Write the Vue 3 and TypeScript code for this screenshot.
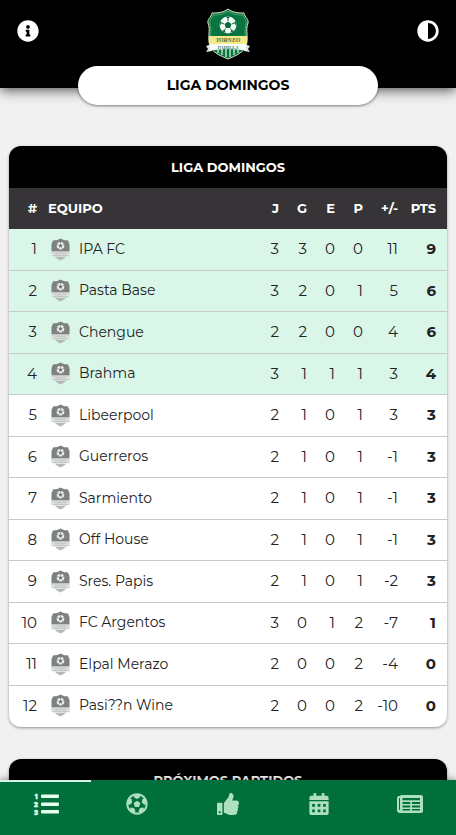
<script setup lang="ts">
import { ref } from 'vue'

interface Team {
  name: string
  played: number
  won: number
  drawn: number
  lost: number
  diff: number
  points: number
}

type Row = [string, number, number, number, number, number, number]

const rows: Row[] = [
  ['IPA FC', 3, 3, 0, 0, 11, 9],
  ['Pasta Base', 3, 2, 0, 1, 5, 6],
  ['Chengue', 2, 2, 0, 0, 4, 6],
  ['Brahma', 3, 1, 1, 1, 3, 4],
  ['Libeerpool', 2, 1, 0, 1, 3, 3],
  ['Guerreros', 2, 1, 0, 1, -1, 3],
  ['Sarmiento', 2, 1, 0, 1, -1, 3],
  ['Off House', 2, 1, 0, 1, -1, 3],
  ['Sres. Papis', 2, 1, 0, 1, -2, 3],
  ['FC Argentos', 3, 0, 1, 2, -7, 1],
  ['Elpal Merazo', 2, 0, 0, 2, -4, 0],
  ['Pasi??n Wine', 2, 0, 0, 2, -10, 0],
]

const teams: Team[] = rows.map(([name, played, won, drawn, lost, diff, points]) => ({
  name, played, won, drawn, lost, diff, points,
}))

const qualifying = 4
const tabs = ['Posiciones', 'Partidos', 'Favoritos', 'Calendario', 'Noticias']
const active = ref(0)
</script>

<template>
  <div class="shell">
    <header class="topbar">
      <button class="icon-button" type="button" aria-label="Información">
        <svg viewBox="0 0 512 512" aria-hidden="true">
          <path d="M256 8C119.043 8 8 119.083 8 256c0 136.997 111.043 248 248 248s248-111.003 248-248C504 119.083 392.957 8 256 8zm0 110c23.196 0 42 18.804 42 42s-18.804 42-42 42-42-18.804-42-42 18.804-42 42-42zm56 254c0 6.627-5.373 12-12 12h-88c-6.627 0-12-5.373-12-12v-24c0-6.627 5.373-12 12-12h12v-64h-12c-6.627 0-12-5.373-12-12v-24c0-6.627 5.373-12 12-12h64c6.627 0 12 5.373 12 12v100h12c6.627 0 12 5.373 12 12v24z" />
        </svg>
      </button>

      <svg class="crest" viewBox="0 0 46 52" role="img" aria-label="Torneo Padilla">
        <path d="M23 1C18 5 12 5 7 5C6 10 2 11 3 15C6 22 2 30 5 38C8 45 16 48 23 51C30 48 38 45 41 38C44 30 40 22 43 15C44 11 40 10 39 5C34 5 28 5 23 1Z" fill="#08743f" stroke="#dfe8c4" stroke-width="1" />
        <path d="M23 3C18 7 13 7 8 7C7 11 4 12 5 16C7 23 5 30 6 36M23 3C28 7 33 7 38 7C39 11 42 12 41 16C39 23 41 30 40 36" fill="none" stroke="#4da172" stroke-width="1" />
        <circle cx="23" cy="17" r="8.5" fill="#f4faf5" />
        <path d="M23 13.5l3.500 2.500-1.300 4h-4.400L19.500 16z" fill="#0b6a3b" />
        <path d="M23 13V9M27 16l4-2M25.500 20.500l2.500 4M20.500 20.500l-2.500 4M19 16l-4-2" stroke="#0b6a3b" stroke-width="1" />
        <path d="M20.500 8.800h5l-2.500 1.700zM31 13l.5 5-2-2.500zM15 13l-.5 5 2-2.500zM29 22l-3.500 3 .5-2.500zM17 22l3.500 3-.5-2.500z" fill="#0b6a3b" />
        <path d="M13 41v4M17 41v6M21 41v8M25 41v8M29 41v6M33 41v4" stroke="#d9eadb" stroke-width="1.300" />
        <path d="M1 38l6-2v7l-6 1 2-3zM45 38l-6-2v7l6 1-2-3z" fill="#dce9e1" />
        <rect x="4" y="28" width="38" height="8" fill="#f5e98c" />
        <path d="M5 36h36v6.500c-12-2-24-2-36 0z" fill="#f8fbfa" />
        <text x="23" y="34" text-anchor="middle" class="crest-name">TORNEO</text>
        <text x="23" y="40.500" text-anchor="middle" class="crest-sub">PADILLA</text>
      </svg>

      <button class="icon-button" type="button" aria-label="Cambiar tema">
        <svg viewBox="0 0 512 512" aria-hidden="true">
          <path d="M8 256c0 136.966 111.033 248 248 248s248-111.034 248-248S392.966 8 256 8 8 119.033 8 256zm248 184V72c101.705 0 184 82.311 184 184 0 101.705-82.311 184-184 184z" />
        </svg>
      </button>

      <h1 class="league">LIGA DOMINGOS</h1>
    </header>

    <main class="content">
      <section class="card">
        <h2 class="card-title">LIGA DOMINGOS</h2>
        <table class="standings">
          <thead>
            <tr>
              <th class="rank" scope="col">#</th>
              <th class="team" scope="col">EQUIPO</th>
              <th class="num" scope="col">J</th>
              <th class="num" scope="col">G</th>
              <th class="num" scope="col">E</th>
              <th class="num" scope="col">P</th>
              <th class="diff" scope="col">+/-</th>
              <th class="points" scope="col">PTS</th>
            </tr>
          </thead>
          <tbody>
            <tr v-for="(team, index) in teams" :key="team.name" :class="{ qualified: index < qualifying }">
              <td class="rank">{{ index + 1 }}</td>
              <td class="team">
                <div class="team-cell">
                  <svg class="shield" viewBox="0 0 20 24" aria-hidden="true">
                    <path d="M10 .5C7 2.500 4 2.500 2 2.500C2 4 .5 5 .5 7V14h19V7c0-2-1.500-3-1.500-4.500C16 2.500 13 2.500 10 .5z" fill="#7d8280" />
                    <circle cx="10" cy="8" r="4" fill="#eceeed" />
                    <path d="M10 6.300l1.700 1.300-.6 2.100H8.900l-.6-2.100z" fill="#6d7472" />
                    <path d="M10 4v2M12 7.500l2-1M11.300 10l1.200 1.500M8.700 10l-1.200 1.500M8 7.500l-2-1" stroke="#6d7472" stroke-width=".7" />
                    <path d="M0 14h20v5H0z" fill="#dfe2e1" />
                    <path d="M1 14.500h18M4 16.500h12M2 18.500h16" stroke="#b2b7b5" stroke-width=".8" />
                    <path d="M4 19.500h12c-2 2-4 3-6 4c-2-1-4-2-6-4z" fill="#b5bab8" />
                  </svg>
                  <span class="team-name">{{ team.name }}</span>
                </div>
              </td>
              <td class="num">{{ team.played }}</td>
              <td class="num">{{ team.won }}</td>
              <td class="num">{{ team.drawn }}</td>
              <td class="num">{{ team.lost }}</td>
              <td class="diff">{{ team.diff }}</td>
              <td class="points">{{ team.points }}</td>
            </tr>
          </tbody>
        </table>
      </section>

      <section class="card">
        <h2 class="card-title">PRÓXIMOS PARTIDOS</h2>
      </section>
    </main>

    <nav class="tabs" aria-label="Secciones">
      <button
        v-for="(tab, index) in tabs"
        :key="tab"
        type="button"
        class="tab"
        :class="{ active: index === active }"
        :aria-label="tab"
        @click="active = index"
      >
        <svg v-if="index === 0" class="wide" viewBox="0 0 26 24" aria-hidden="true">
          <rect x="8" y="2.500" width="18" height="3.500" rx="1" />
          <rect x="8" y="10.500" width="18" height="3.500" rx="1" />
          <rect x="8" y="18" width="18" height="3.500" rx="1" />
          <text x="3" y="6.500" text-anchor="middle" class="digit">1</text>
          <text x="3" y="14.500" text-anchor="middle" class="digit">2</text>
          <text x="3" y="22.500" text-anchor="middle" class="digit">3</text>
        </svg>
        <svg v-else-if="index === 1" viewBox="0 0 512 512" aria-hidden="true">
          <path d="M504 256c0 136.967-111.033 248-248 248S8 392.967 8 256 119.033 8 256 8s248 111.033 248 248zm-48 0l-.003-.282-26.064 22.741-62.679-58.500 16.454-84.355 34.303 3.072c-24.889-34.216-60.004-60.089-100.709-73.141l13.651 31.939L256 139l-74.953-41.525 13.651-31.939c-40.631 13.028-75.780 38.870-100.709 73.141l34.565-3.073 16.192 84.355-62.678 58.500-26.064-22.741-.003.282c0 43.015 13.497 83.952 38.472 117.991l7.704-33.897 85.138 10.447 36.301 77.826-29.902 17.786c40.202 13.122 84.290 13.148 124.572 0l-29.902-17.786 36.301-77.826 85.138-10.447 7.704 33.897C442.503 339.952 456 299.015 456 256zm-248.102 69.571l-29.894-91.312L256 177.732l77.996 56.527-29.622 91.312h-96.476z" />
        </svg>
        <svg v-else-if="index === 2" viewBox="0 0 512 512" aria-hidden="true">
          <path d="M104 224H24c-13.255 0-24 10.745-24 24v240c0 13.255 10.745 24 24 24h80c13.255 0 24-10.745 24-24V248c0-13.255-10.745-24-24-24zM64 472c-13.255 0-24-10.745-24-24s10.745-24 24-24 24 10.745 24 24-10.745 24-24 24zM384 81.452c0 42.416-25.970 66.208-33.277 94.548h101.723c33.397 0 59.397 27.746 59.553 58.098.084 17.938-7.546 37.249-19.439 49.197l-.11.11c9.836 23.337 8.237 56.037-9.308 79.469 8.681 25.895-.069 57.704-16.382 74.757 4.298 17.598 2.244 32.575-6.148 44.632C440.202 511.587 389.616 512 346.839 512l-2.845-.001c-48.287-.017-87.806-17.598-119.560-31.725-15.957-7.099-36.821-15.887-52.651-16.178-6.540-.120-11.783-5.457-11.783-11.998v-213.770c0-3.200 1.282-6.271 3.558-8.521 39.614-39.144 56.648-80.587 89.117-113.111 14.804-14.832 20.188-37.236 25.393-58.902C282.515 39.293 291.817 0 312 0c24 0 72 8 72 81.452z" />
        </svg>
        <svg v-else-if="index === 3" viewBox="0 0 512 512" aria-hidden="true">
          <path fill-rule="evenodd" d="M32 192h448v272c0 26.500-21.500 48-48 48H80c-26.500 0-48-21.500-48-48zM96 256v64h64v-64zM224 256v64h64v-64zM352 256v64h64v-64zM96 384v64h64v-64zM224 384v64h64v-64zM352 384v64h64v-64zM432 64h-48V16c0-8.800-7.200-16-16-16h-32c-8.800 0-16 7.200-16 16v48H192V16c0-8.800-7.200-16-16-16h-32c-8.800 0-16 7.200-16 16v48H80c-26.500 0-48 21.500-48 48v48h448v-48c0-26.500-21.500-48-48-48z" />
        </svg>
        <svg v-else class="wide" viewBox="0 0 26 24" aria-hidden="true">
          <path fill-rule="evenodd" d="M5 3h19a2 2 0 0 1 2 2v14a2 2 0 0 1-2 2H3a3 3 0 0 1-3-3V6a2 2 0 0 1 2-2h1a2 2 0 0 1 2-1zM2 6v12h1V6zM5.500 6v2.300H23V6zM5.500 10v2h7.800v-2zM15 10v2h8v-2zM5.500 13.500v2h7.800v-2zM15 13.500v2h8v-2zM5.500 17v1.500h7.800V17zM15 17v1.500h8V17z" />
        </svg>
      </button>
    </nav>
  </div>
</template>

<style>
body {
  margin: 0;
  background: #f2f1f2;
}
</style>

<style scoped>
.shell {
  display: flex;
  flex-direction: column;
  height: 100vh;
  overflow: hidden;
  background: #f2f1f2;
  color: #222;
  font-family: Montserrat, Inter, "Liberation Sans", sans-serif;
  font-size: 15px;
  line-height: 1.5;
}

.shell * {
  box-sizing: border-box;
}

button {
  padding: 0;
  border: 0;
  background: none;
  color: inherit;
  cursor: pointer;
}

.topbar {
  position: relative;
  z-index: 2;
  display: flex;
  flex: none;
  justify-content: space-between;
  align-items: flex-start;
  height: 88px;
  padding: 8px 17px 0;
  background: #000;
  box-shadow: 0 2px 12px rgba(0, 0, 0, 0.7);
}

.icon-button {
  display: flex;
  align-items: center;
  height: 45px;
  color: #fff;
}

.icon-button svg {
  display: block;
  width: 22px;
  height: 22px;
  fill: currentColor;
}

.crest {
  width: 46px;
  height: 52px;
}

.crest-name {
  fill: #3d6b35;
  font: italic bold 6px "Liberation Serif", serif;
}

.crest-sub {
  fill: #3d7a65;
  font: italic bold 5px "Liberation Serif", serif;
}

.league {
  position: absolute;
  top: 66px;
  left: 50%;
  width: 300px;
  margin: 0 0 0 -150px;
  border-radius: 20px;
  background: #fff;
  box-shadow: 0 1px 3px rgba(0, 0, 0, 0.5);
  color: #000;
  font-size: 14px;
  font-weight: 700;
  line-height: 39px;
  text-align: center;
}

.content {
  flex: 1;
  min-height: 0;
  padding: 58px 9px 32px;
  overflow-y: auto;
  scrollbar-width: none;
}

.card {
  margin-bottom: 32px;
  overflow: hidden;
  border-radius: 12px;
  background: #fff;
  box-shadow: 0 1px 3px rgba(0, 0, 0, 0.4);
}

.card-title {
  margin: 0;
  background: #000;
  color: #fff;
  font-size: 13px;
  font-weight: 700;
  line-height: 42px;
  text-align: center;
}

.standings {
  width: 100%;
  border-collapse: separate;
  border-spacing: 0;
  table-layout: fixed;
}

th,
td {
  padding: 9px 11px 9px 0;
  text-align: right;
  white-space: nowrap;
}

th {
  padding-top: 0;
  padding-bottom: 0;
  background: #373438;
  color: #fff;
  font-size: 13px;
  font-weight: 700;
  line-height: 41px;
}

td {
  border-bottom: 1px solid #cacaca;
}

tr:last-child td {
  border-bottom-color: transparent;
}

.qualified td {
  background: #d9f6e9;
}

.rank {
  width: 39px;
}

.team {
  padding-right: 0;
  text-align: left;
}

.num {
  width: 28px;
}

.diff {
  width: 35px;
}

.points {
  width: 38px;
}

td.points {
  font-weight: 700;
}

.team-cell {
  display: flex;
  align-items: center;
  gap: 9px;
  height: 1.5em;
  padding-left: 3px;
}

.team-name {
  font-size: 14px;
}

.shield {
  flex: none;
  width: 19px;
  height: 23px;
}

.tabs {
  position: relative;
  z-index: 2;
  display: flex;
  flex: none;
  height: 55px;
  background: #006f3b;
  box-shadow: 0 0 8px rgba(0, 0, 0, 0.5);
}

.tab {
  display: flex;
  flex: 1;
  justify-content: center;
  align-items: center;
  padding-bottom: 9px;
  border-top: 2px solid transparent;
  color: #addfc1;
}

.tab.active {
  border-top-color: #d4f5e2;
  color: #e5ffef;
}

.tab svg {
  width: 22px;
  height: 22px;
  fill: currentColor;
}

.tab svg.wide {
  width: 26px;
  height: 24px;
}

.digit {
  stroke: currentColor;
  stroke-width: 0.5px;
  font: 900 6px Inter, sans-serif;
}
</style>
